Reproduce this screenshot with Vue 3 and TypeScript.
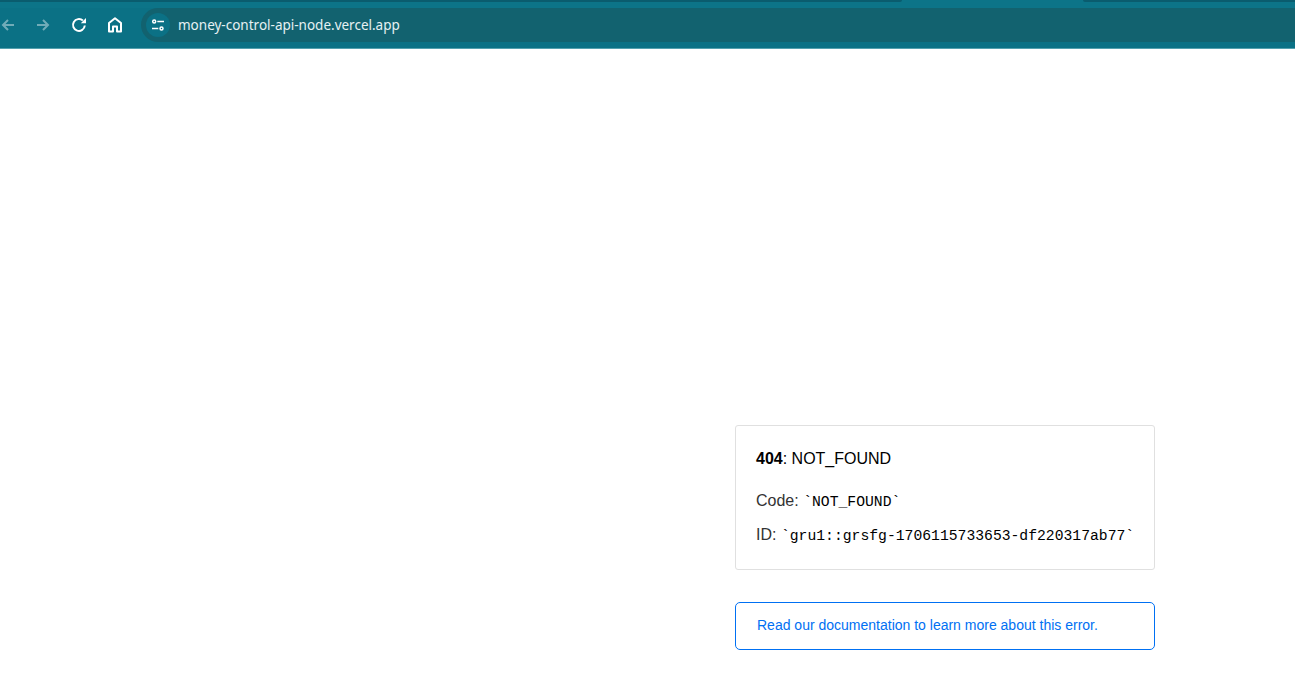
<template>
  <div class="page">
    <div class="tabstrip">
      <div class="tab tab-left"></div>
      <div class="tab tab-right"></div>
    </div>
    <div class="toolbar">
      <button class="nav dim first">
        <svg viewBox="0 0 16 16" width="16" height="16"><path d="M14 8H3.500M8 3 3 8l5 5" /></svg>
      </button>
      <button class="nav dim">
        <svg viewBox="0 0 16 16" width="16" height="16"><path d="M2 8h10.500M8 3l5 5-5 5" /></svg>
      </button>
      <button class="nav">
        <svg viewBox="0 0 18 18" width="18" height="18"><path d="M14.800 9.500A5.900 5.900 0 1 1 12.900 4.600" /><path class="solid" d="M10.800 7.200h5.200V2z" /></svg>
      </button>
      <button class="nav">
        <svg viewBox="0 0 18 18" width="18" height="18"><path d="M3 15.500V7l6-4.700L15 7v8.500h-4v-5H7v5z" stroke-linejoin="round" /></svg>
      </button>
      <div class="omnibox">
        <span class="site-info">
          <svg viewBox="0 0 16 16" width="16" height="16">
            <path d="M7.300 4.500H14M2 11.500h6.300" />
            <circle cx="4.200" cy="4.500" r="1.500" />
            <circle cx="11.500" cy="11.500" r="1.500" />
          </svg>
        </span>
        <span class="url">money-control-api-node.vercel.app</span>
      </div>
    </div>
    <div class="content">
      <main class="error-wrap">
        <section class="card">
          <p class="title"><strong>404</strong>: NOT_FOUND</p>
          <p class="row">Code: <code>`NOT_FOUND`</code></p>
          <p class="row">ID: <code>`{{ errorId }}`</code></p>
        </section>
        <a class="docs" href="#">Read our documentation to learn more about this error.</a>
      </main>
    </div>
  </div>
</template>

<script setup lang="ts">
const errorId = 'gru1::grsfg-1706115733653-df220317ab77'
</script>

<style>
html,
body {
  margin: 0;
  background: #fff;
  overflow: hidden;
}
</style>

<style scoped>
.page {
  width: 1295px;
  height: 673px;
  display: flex;
  flex-direction: column;
}

.tabstrip {
  height: 8px;
  background: #0c7488;
  display: flex;
}

.tab {
  height: 2px;
  background: #0a5c6e;
}

.tab-left {
  width: 902px;
  border-bottom-right-radius: 6px;
}

.tab-right {
  margin-left: 181px;
  flex: 1;
  border-bottom-left-radius: 6px;
}

.toolbar {
  height: 41px;
  box-sizing: border-box;
  background: #0b7185;
  border-bottom: 1px solid #54a0ae;
  display: flex;
  align-items: center;
  padding-bottom: 6px;
}

.nav {
  width: 36px;
  height: 32px;
  margin: 0;
  padding: 0;
  border: 0;
  background: none;
  display: flex;
  align-items: center;
  justify-content: center;
  color: #fff;
}

.first {
  width: 16px;
  margin-right: 9px;
}

.dim {
  opacity: 0.42;
}

.nav svg {
  fill: none;
  stroke: currentColor;
  stroke-width: 2;
}

.site-info svg {
  fill: none;
  stroke: currentColor;
  stroke-width: 1.500;
}

.nav .solid {
  fill: currentColor;
  stroke: none;
}

.omnibox {
  flex: 1;
  height: 34px;
  margin-left: 8px;
  background: #12626f;
  border-radius: 17px 0 0 17px;
  display: flex;
  align-items: center;
  padding-left: 5px;
}

.site-info {
  width: 24px;
  height: 24px;
  border-radius: 50%;
  background: #0b7185;
  display: flex;
  align-items: center;
  justify-content: center;
  color: #fff;
}

.url {
  margin-left: 8px;
  color: #e6f1f3;
  font-family: "Noto Sans", sans-serif;
  font-size: 13.500px;
}

.content {
  flex: 1;
  background: #fff;
  display: flex;
  justify-content: flex-end;
  padding-right: 140px;
}

.error-wrap {
  width: 420px;
  padding-top: 376px;
  font-family: "Liberation Sans", Arial, sans-serif;
}

.card {
  box-sizing: border-box;
  height: 145px;
  border: 1px solid #e0e0e0;
  border-radius: 3px;
  padding: 21px 20px 20px;
}

.title {
  margin: 0 0 18px;
  font-size: 16px;
  line-height: 24px;
  color: #000;
}

.row {
  margin: 0 0 9px;
  font-size: 16px;
  line-height: 24px;
  color: #333;
  white-space: nowrap;
}

code {
  font-family: "Liberation Mono", "Courier New", monospace;
  font-size: 14.720px;
  color: #000;
}

.docs {
  display: block;
  box-sizing: border-box;
  height: 48px;
  margin-top: 32px;
  padding: 0 21px;
  border: 1px solid #0070f3;
  border-radius: 5px;
  font-size: 14px;
  line-height: 44px;
  color: #0070f3;
  text-decoration: none;
}
</style>
